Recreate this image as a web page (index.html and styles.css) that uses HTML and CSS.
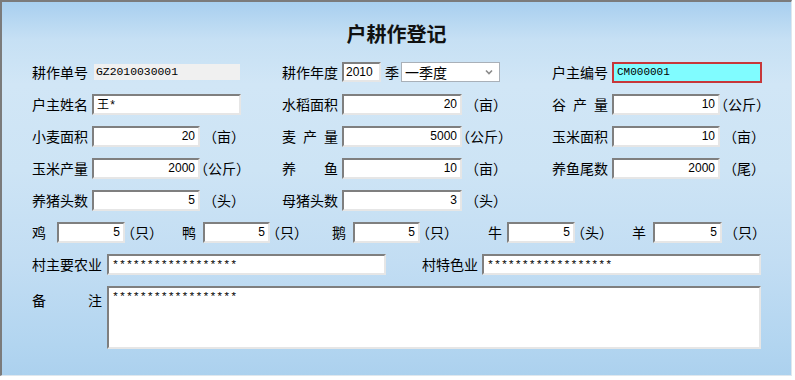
FILE: index.html
```html
<!DOCTYPE html>
<html lang="zh-CN">
<head>
<meta charset="UTF-8" />
<title>户耕作登记</title>
<link rel="stylesheet" href="styles.css">
</head>
<body>

<div class="panel">
  <h1 class="title">户耕作登记</h1>

  <form class="form">
    <!-- 第一行 -->
    <div class="row">
      <div class="cell c1">
        <label class="lbl">耕作单号</label>
        <span class="code">GZ2010030001</span>
      </div>
      <div class="cell c2">
        <label class="lbl">耕作年度</label>
        <input class="year" value="2010">
        <span class="sep">季</span>
        <div class="select">
          <span>一季度</span>
          <svg width="8" height="6" viewBox="0 0 8 6"><path d="M1 1.5 L4 4.5 L7 1.5" fill="none" stroke="#8a8a8a" stroke-width="1.6"/></svg>
        </div>
      </div>
      <div class="cell">
        <label class="lbl">户主编号</label>
        <input class="txt key" value="CM000001">
      </div>
    </div>

    <div class="row">
      <div class="cell c1">
        <label class="lbl">户主姓名</label>
        <input class="txt name" value="王*">
      </div>
      <div class="cell c2">
        <label class="lbl">水稻面积</label>
        <input class="num mid" value="20">
        <span class="unit">（亩）</span>
      </div>
      <div class="cell">
        <label class="lbl">谷产量</label>
        <input class="num short" value="10">
        <span class="unit kg">（公斤）</span>
      </div>
    </div>

    <div class="row">
      <div class="cell c1">
        <label class="lbl">小麦面积</label>
        <input class="num short" value="20">
        <span class="unit">（亩）</span>
      </div>
      <div class="cell c2">
        <label class="lbl">麦产量</label>
        <input class="num mid" value="5000">
        <span class="unit kg">（公斤）</span>
      </div>
      <div class="cell">
        <label class="lbl">玉米面积</label>
        <input class="num short" value="10">
        <span class="unit">（亩）</span>
      </div>
    </div>

    <div class="row">
      <div class="cell c1">
        <label class="lbl">玉米产量</label>
        <input class="num short" value="2000">
        <span class="unit kg">（公斤）</span>
      </div>
      <div class="cell c2">
        <label class="lbl">养鱼</label>
        <input class="num mid" value="10">
        <span class="unit">（亩）</span>
      </div>
      <div class="cell">
        <label class="lbl">养鱼尾数</label>
        <input class="num short" value="2000">
        <span class="unit">（尾）</span>
      </div>
    </div>

    <div class="row">
      <div class="cell c1">
        <label class="lbl">养猪头数</label>
        <input class="num short" value="5">
        <span class="unit">（头）</span>
      </div>
      <div class="cell c2">
        <label class="lbl">母猪头数</label>
        <input class="num mid" value="3">
        <span class="unit">（头）</span>
      </div>
    </div>

    <!-- 家禽牲畜 -->
    <div class="row animals">
      <label class="a-lbl">鸡</label>
      <input class="num" value="5">
      <span class="a-unit">（只）</span>
      <label class="a-lbl">鸭</label>
      <input class="num" value="5">
      <span class="a-unit">（只）</span>
      <label class="a-lbl">鹅</label>
      <input class="num" value="5">
      <span class="a-unit">（只）</span>
      <label class="a-lbl">牛</label>
      <input class="num" value="5">
      <span class="a-unit">（头）</span>
      <label class="a-lbl">羊</label>
      <input class="num" value="5">
      <span class="a-unit last">（只）</span>
    </div>

    <div class="row">
      <div class="cell c-wide">
        <label class="lbl lbl5">村主要农业</label>
        <input class="txt long" value="******************">
      </div>
      <div class="cell">
        <label class="lbl">村特色业</label>
        <input class="txt long" value="******************">
      </div>
    </div>

    <div class="row memo">
      <label class="lbl lbl5">备注</label>
      <textarea class="txt">******************</textarea>
    </div>
  </form>
</div>

</body>
</html>
```

FILE: styles.css
```css
/* Base */
html, body {
  margin: 0;
  padding: 0;
  background: #fff;
  font-family: "Noto Sans CJK SC", sans-serif;
  color: #000;
}

/* Window panel */
.panel {
  width: 789px;
  height: 373px;
  border-left: 2px solid #7b7b7b;
  border-top: 2px solid #7b7b7b;
  border-right: 1px solid #dfe7ee;
  border-bottom: 1px solid #dfe7ee;
  background: linear-gradient(180deg,
    #a8cfef 0%,
    #c6e0f4 10%,
    #d1e6f6 22%,
    #cde4f5 45%,
    #c2ddf3 70%,
    #b2d5f0 92%,
    #acd1ee 100%);
}

.title {
  margin: 0;
  padding-top: 22px;
  font-size: 20px;
  line-height: 20px;
  font-weight: 700;
  text-align: center;
  color: #111;
}

.form {
  padding: 12px 0 0 30px;
}

/* Rows */
.row {
  display: flex;
  align-items: center;
  height: 32px;
}
.cell {
  display: flex;
  align-items: center;
}
.c1 { width: 250px; }
.c2 { width: 270px; }
.c-wide { width: 390px; }

.lbl {
  width: 56px;
  margin-right: 4px;
  font-size: 14px;
  line-height: 20px;
  white-space: nowrap;
  text-align: justify;
  text-align-last: justify;
}
.lbl5 {
  width: 70px;
  margin-right: 5px;
}

/* Fields */
input, textarea {
  box-sizing: border-box;
  height: 21px;
  margin: 0;
  padding: 0 3px;
  border: 2px solid;
  border-color: #7f7f7f #e6e6e6 #e6e6e6 #7f7f7f;
  background: #fff;
  font: 12px "Liberation Sans", "Noto Sans CJK SC", sans-serif;
  color: #000;
  outline: none;
}
.num { text-align: right; }
.txt { font: 11.6px "Liberation Mono", "Noto Sans CJK SC", monospace; }
.short { width: 108px; }
.mid { width: 120px; }
.name { width: 149px; font-size: 12px; }
.long { width: 279px; }

.code {
  box-sizing: border-box;
  width: 146px;
  height: 16px;
  margin-left: 2px;
  padding-left: 2px;
  background: #f0f0f0;
  font: 11.4px/16px "Liberation Mono", monospace;
}

.year {
  width: 39px;
  height: 20px;
  padding: 0 2px;
}
.sep {
  margin: 0 2px 0 4px;
  font-size: 14px;
}
.select {
  box-sizing: border-box;
  width: 99px;
  height: 20px;
  display: flex;
  align-items: center;
  justify-content: space-between;
  padding: 0 6px 0 3px;
  border: 1px solid #a9b0b8;
  background: #fff;
  font-size: 14px;
}

.key {
  width: 150px;
  border: 2px solid #c7373a;
  background: #80fcff;
  font-size: 11px;
}

.unit {
  width: 48px;
  font-size: 14px;
  text-align: center;
  white-space: nowrap;
}
.unit.kg {
  width: 54px;
  margin-left: -6px;
  text-align: left;
}

/* Poultry / livestock row */
.animals {
  display: grid;
  grid-template-columns: 25px 68px 57px 21px 67px 62px 21px 67px 68px 19px 68px 57px 21px 69px 46px;
}
.a-lbl { font-size: 14px; }
.a-unit {
  margin-left: -4px;
  font-size: 14px;
  white-space: nowrap;
}
.a-unit.last {
  margin-left: 0;
  text-align: center;
}

/* Memo */
.memo {
  height: auto;
  align-items: flex-start;
  margin-top: 6px;
}
.memo .lbl { margin-top: 4px; }
.memo textarea {
  width: 654px;
  height: 63px;
  padding: 2px 3px;
  resize: none;
}
```
